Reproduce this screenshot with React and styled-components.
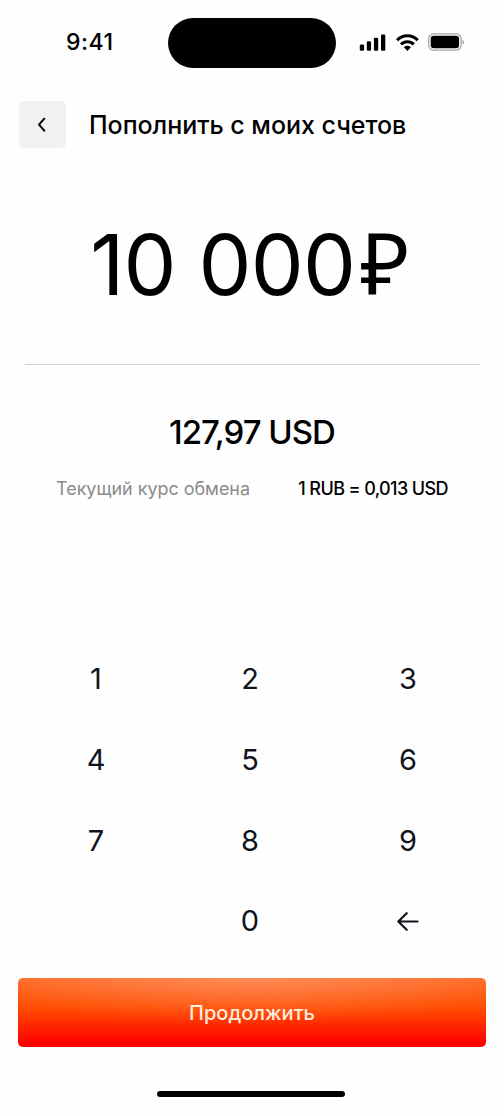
import React, { useState } from 'react';
import styled, { createGlobalStyle } from 'styled-components';

const GlobalStyle = createGlobalStyle`
  * {
    box-sizing: border-box;
  }

  body {
    margin: 0;
    background: #fefefe;
  }

  button {
    padding: 0;
    border: 0;
    background: none;
    font: inherit;
    color: inherit;
    cursor: pointer;
  }
`;

const Screen = styled.main`
  display: flex;
  flex-direction: column;
  width: 504px;
  height: 1116px;
  overflow: hidden;
  background: #fefefe;
  color: #000;
  font-family: Inter, 'Liberation Sans', sans-serif;
`;

const StatusBar = styled.div`
  display: flex;
  height: 68px;
  padding: 18px 39px 0 66px;
`;

const Time = styled.div`
  width: 102px;
  padding-top: 9px;
  font-size: 23px;
  font-weight: 500;
  line-height: 30px;
  white-space: nowrap;
  letter-spacing: 0.5px;
`;

const Island = styled.div`
  width: 168px;
  height: 50px;
  border-radius: 25px;
  background: #000;
`;

const StatusIcons = styled.svg`
  display: block;
  margin: 14px 0 0 23px;
`;

const Header = styled.header`
  display: flex;
  align-items: center;
  gap: 23px;
  margin-top: 33px;
  padding-left: 19px;
`;

const BackButton = styled.button`
  display: flex;
  align-items: center;
  justify-content: center;
  width: 47px;
  height: 47px;
  padding-right: 2px;
  border-radius: 5px;
  background: #f1f1f1;
`;

const Title = styled.h1`
  margin: 0;
  padding-top: 1px;
  font-size: 25px;
  font-weight: 500;
  line-height: 32px;
  white-space: nowrap;
  letter-spacing: -0.03px;
`;

const Amount = styled.div`
  margin: 66px 24px 0 25px;
  height: 151px;
  border-bottom: 1px solid #d2d2d2;
  font-size: 84px;
  font-weight: 400;
  line-height: 102px;
  text-align: center;
  white-space: nowrap;
  letter-spacing: -0.8px;
`;

const Currency = styled.span`
  margin: 0 6px 0 5px;
  font-family: 'Open Sans', 'Noto Sans', sans-serif;
  font-size: 85px;
  line-height: 1;
`;

const Converted = styled.div`
  margin-top: 46px;
  font-size: 33px;
  font-weight: 500;
  line-height: 42px;
  text-align: center;
  letter-spacing: -1px;
`;

const Rate = styled.div`
  display: flex;
  justify-content: space-between;
  margin-top: 23px;
  padding: 0 56px;
  font-size: 18px;
  line-height: 26px;
  white-space: nowrap;
`;

const RateLabel = styled.span`
  color: #8b8b8b;
  letter-spacing: -0.04px;
`;

const RateValue = styled.span`
  font-weight: 500;
  letter-spacing: -0.6px;
`;

const Keypad = styled.div`
  display: grid;
  grid-template-columns: 152px 156px 160px;
  grid-auto-rows: 80.7px;
  margin: 137px 0 0 20px;
`;

const Key = styled.button`
  display: flex;
  align-items: center;
  justify-content: center;
  color: #10141d;
  font-size: 29px;
  font-weight: 400;
  line-height: 36px;
`;

const ContinueButton = styled.button`
  width: 468px;
  height: 69px;
  margin: 16px 0 0 18px;
  padding-top: 2px;
  border-radius: 5px;
  background:
    radial-gradient(ellipse 62% 68% at 50% 0, rgba(255, 255, 255, 0.23), rgba(255, 255, 255, 0)),
    linear-gradient(#ff6a26 0%, #ff4d00 42%, #ff0000 96%);
  color: #ffeedd;
  font-size: 20px;
  font-weight: 500;
`;

const HomeIndicator = styled.div`
  width: 188px;
  height: 6px;
  margin: 44px 0 0 157px;
  border-radius: 3px;
  background: #000;
`;

const KEYS = ['1', '2', '3', '4', '5', '6', '7', '8', '9', '', '0', 'back'];

const formatAmount = (value) => value.replace(/\B(?=(\d{3})+$)/g, '\u00a0');

const App = () => {
  const [amount, setAmount] = useState('10000');

  const handleKey = (key) => {
    if (key === 'back') {
      setAmount(amount.slice(0, -1) || '0');
      return;
    }
    setAmount(amount === '0' ? key : amount + key);
  };

  const usd = (Number(amount) * 0.012797).toFixed(2).replace('.', ',');

  return (
    <>
      <GlobalStyle />
      <Screen>
        <StatusBar>
          <Time>9:41</Time>
          <Island />
          <StatusIcons width="106" height="22" viewBox="0 0 106 22">
            {/* Signal */}
            <rect x="0.8" y="12.5" width="4.3" height="6.3" rx="1.3" />
            <rect x="7.8" y="9.3" width="4.3" height="9.5" rx="1.3" />
            <rect x="14.9" y="5.8" width="4.3" height="13" rx="1.3" />
            <rect x="22" y="2.5" width="4.3" height="16.3" rx="1.3" />
            {/* Wi-Fi */}
            <g fill="none" stroke="#000" strokeWidth="3.1">
              <path d="M38.1 8.2a14.2 14.2 0 0 1 20.6 0" />
              <path d="M42 12.4a8.9 8.9 0 0 1 12.8 0" />
            </g>
            <path d="M44.9 15.2a5 5 0 0 1 7 0L48.4 18.9z" />
            {/* Battery */}
            <rect x="69.7" y="1.8" width="32.4" height="16.4" rx="5" fill="none" stroke="#a6a6a6" strokeWidth="1.3" />
            <rect x="71.7" y="3.8" width="28.4" height="12.4" rx="3.3" />
            <path d="M103.4 7.8v4.8c1-.4 1.6-1.3 1.6-2.4S104.4 8.2 103.4 7.8z" fill="#a6a6a6" />
          </StatusIcons>
        </StatusBar>

        <Header>
          <BackButton aria-label="Назад">
            <svg width="10" height="16" viewBox="0 0 10 16" fill="none" stroke="#000" strokeWidth="2">
              <path d="M7.3 1.7 2 7.7l5.3 6" strokeLinecap="round" strokeLinejoin="round" />
            </svg>
          </BackButton>
          <Title>Пополнить с моих счетов</Title>
        </Header>

        <Amount>
          {formatAmount(amount)}
          <Currency>₽</Currency>
        </Amount>
        <Converted>{usd} USD</Converted>
        <Rate>
          <RateLabel>Текущий курс обмена</RateLabel>
          <RateValue>1 RUB = 0,013 USD</RateValue>
        </Rate>

        <Keypad>
          {KEYS.map((key, index) => {
            if (!key) return <span key={index} />;

            return (
              <Key key={index} onClick={() => handleKey(key)}>
                {key === 'back' ? (
                  <svg width="22" height="20" viewBox="0 0 22 20" fill="none" stroke="#10141d" strokeWidth="2.2">
                    <path d="M20.5 10.5H1.5M9.7 2.2 1.3 10.5l8.4 8.3" strokeLinecap="round" strokeLinejoin="round" />
                  </svg>
                ) : key}
              </Key>
            );
          })}
        </Keypad>

        <ContinueButton>Продолжить</ContinueButton>
        <HomeIndicator />
      </Screen>
    </>
  );
};

export default App;
